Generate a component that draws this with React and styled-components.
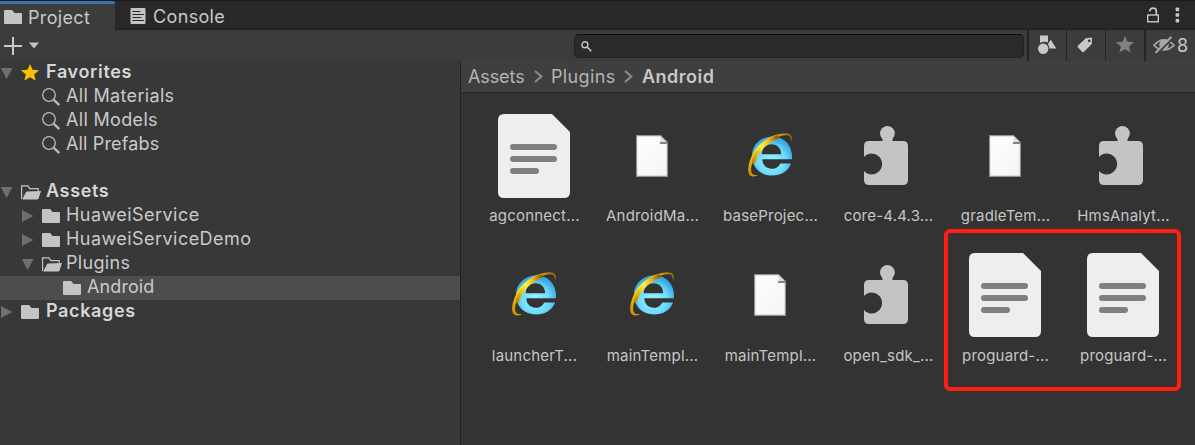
import React from "react";
import styled, { createGlobalStyle } from "styled-components";

const GlobalStyle = createGlobalStyle`
  * { box-sizing: border-box; }
  body { margin: 0; background: #333333; }
  svg { display: block; flex: none; }
`;

const Window = styled.div`
  position: relative;
  display: flex;
  flex-direction: column;
  width: 1195px;
  height: 445px;
  overflow: hidden;
  background: #383838;
  color: #c8c8c8;
  font-family: Inter, "Liberation Sans", sans-serif;
  font-size: 18px;
  white-space: nowrap;
`;

const TabBar = styled.div`
  display: flex;
  height: 30px;
  flex: none;
  background: #282828;
  border-top: 1px solid #191919;
  border-bottom: 1px solid #202020;
`;

const Tab = styled.div`
  display: flex;
  align-items: center;
  gap: ${(p) => (p.$active ? 6 : 7)}px;
  width: ${(p) => (p.$active ? 115 : 130)}px;
  height: ${(p) => (p.$active ? 29 : 28)}px;
  padding: ${(p) => (p.$active ? "0 0 0 4px" : "2px 0 0 15px")};
  background: ${(p) => (p.$active ? "#3c3c3c" : "transparent")};
  border-top: ${(p) => (p.$active ? "3px solid #3a72b0" : "0")};
  border-radius: 0 2px 0 0;
  letter-spacing: 0.35px;
`;

const WindowActions = styled.div`
  display: flex;
  align-items: center;
  gap: 16px;
  margin-left: auto;
  padding-right: 15px;
`;

const Toolbar = styled.div`
  display: flex;
  align-items: center;
  height: 31px;
  flex: none;
  background: #3c3c3c;
`;

const AddButton = styled.div`
  display: flex;
  align-items: center;
  gap: 7px;
  padding-left: 4px;
`;

const SearchField = styled.div`
  display: flex;
  align-items: center;
  width: 450px;
  height: 24px;
  margin-left: auto;
  padding: 1px 0 0 6px;
  background: #2a2a2a;
  border: 1px solid #212121;
  border-top-color: #0d0d0d;
  border-radius: 5px;
`;

const FilterButtons = styled.div`
  display: flex;
  height: 31px;
  margin-left: 3px;
`;

const FilterButton = styled.div`
  display: flex;
  align-items: center;
  justify-content: center;
  gap: 2px;
  width: ${(p) => p.$width}px;
  padding: 0 ${(p) => p.$inset || 0}px 1px 0;
  border-left: ${(p) => p.$edge || 1}px solid #242424;
`;

const Panels = styled.div`
  display: flex;
  flex: 1;
  min-height: 0;
`;

const Tree = styled.div`
  width: 460px;
  flex: none;
`;

const TreeRow = styled.div`
  display: flex;
  align-items: center;
  height: 24px;
  padding-left: ${(p) => p.$depth * 21}px;
  margin-top: ${(p) => p.$gap || 0}px;
  background: ${(p) => (p.$selected ? "#4d4d4d" : "transparent")};
  color: ${(p) => (p.$bold ? "#d6d6d6" : "#cacaca")};
  font-weight: ${(p) => (p.$bold ? 600 : 400)};
  letter-spacing: ${(p) => (p.$bold ? 0.65 : p.$tracking || 0.33)}px;
`;

const ArrowSlot = styled.span`
  width: 21px;
  flex: none;
`;

const IconSlot = styled.span`
  width: ${(p) => (p.$wide ? 25 : 24)}px;
  flex: none;
`;

const TreeLabel = styled.span`
  line-height: 22px;
  padding-bottom: 2px;
`;

const Browser = styled.div`
  flex: 1;
  background: #333333;
  border-left: 1px solid #222222;
`;

const Breadcrumb = styled.div`
  display: flex;
  align-items: center;
  height: 32px;
  padding-left: 7px;
  background: #3f3f3f;
  border-bottom: 1px solid #282828;
  letter-spacing: 0.1px;
`;

const Crumb = styled.span`
  width: ${(p) => p.$width}px;
  font-weight: ${(p) => (p.$current ? 600 : 400)};
  color: ${(p) => (p.$current ? "#c8c8c8" : "#b4b4b4")};
  letter-spacing: ${(p) => p.$tracking}px;
`;

const CrumbArrow = styled.span`
  width: ${(p) => p.$width}px;
`;

const Grid = styled.div`
  display: grid;
  grid-template-columns: repeat(4, 118px) 116px 120px;
  grid-auto-rows: 139px;
  padding: 15px 0 0 14px;
`;

const Asset = styled.div`
  display: flex;
  flex-direction: column;
  align-items: center;
`;

const Thumb = styled.div`
  display: flex;
  align-items: center;
  justify-content: center;
  height: 96px;
`;

const AssetName = styled.div`
  margin-top: ${(p) => (p.$lower ? 3 : 2)}px;
  padding-left: 1px;
  font-size: 15px;
  line-height: 20px;
  letter-spacing: 0.2px;
  color: #c6c6c6;
`;

const Highlight = styled.div`
  position: absolute;
  left: 944px;
  top: 229px;
  width: 237px;
  height: 162px;
  border: 4px solid #ff1f12;
  border-radius: 6px;
`;

const Folder = () => (
  <svg width="18" height="14" viewBox="0 0 18 14">
    <path d="M0 1Q0 0 1 0H7.5Q8.3 0 8.8 .7L10.5 3H17Q18 3 18 4V13Q18 14 17 14H1Q0 14 0 13Z" fill="#c4c4c4" />
  </svg>
);

const OpenFolder = () => (
  <svg width="20" height="15" viewBox="0 0 20 15">
    <path d="M.6 14V.9H7L8.7 3.6H17.2V6" fill="none" stroke="#c4c4c4" strokeWidth="1.2" />
    <path d="M1.3 14.2 4.8 7.4Q5.2 6.5 6.2 6.4L20 6 17.6 13.4Q17.3 14.5 16 14.5H1Z" fill="#c4c4c4" />
  </svg>
);

const Star = ({ fill }) => (
  <svg width="18" height="18" viewBox="0 0 18 18">
    <path d="M9 0 11.5 5.8 18 6.3 13.1 10.4 14.7 16.6 9 13.2 3.3 16.6 4.9 10.4 0 6.3 6.5 5.8Z" fill={fill} />
  </svg>
);

const Magnifier = () => (
  <svg width="18" height="18" viewBox="0 0 18 18" fill="none" stroke="#b8b8b8">
    <circle cx="7" cy="7" r="6.3" strokeWidth="1.3" />
    <path d="M11.6 11.6 12.5 12.5" strokeWidth="1.2" />
    <path d="M12.6 12.7 16.6 16.4" strokeWidth="2.4" strokeLinecap="round" />
  </svg>
);

const Arrow = ({ open }) => (
  <svg width="13" height="14" viewBox="0 0 13 14">
    <path d={open ? "M.8 2H12.5L6.6 13Z" : "M1 1V13L12.5 7Z"} fill="#6f6f6f" />
  </svg>
);

const ConsoleIcon = () => (
  <svg width="16" height="16" viewBox="0 0 16 16">
    <rect x=".5" width="15" height="16" rx="1" fill="#c4c4c4" />
    <path d="M2.5 3.5H10.5M2.5 6.5H14M2.5 9.5H11.5M2.5 12.5H14" stroke="#282828" strokeWidth="1.2" />
  </svg>
);

const Lock = () => (
  <svg width="12" height="16" viewBox="0 0 12 16" fill="none" stroke="#c8c8c8">
    <rect x=".7" y="8" width="10.6" height="6.8" strokeWidth="1.4" />
    <path d="M2.7 4.3Q3 1.2 6.2 1.2Q9.3 1.2 9.3 4.5V8" strokeWidth="1.7" />
  </svg>
);

const Kebab = () => (
  <svg width="5" height="16" viewBox="0 0 5 16" fill="#c8c8c8">
    <rect x=".6" y=".6" width="3.6" height="3.6" rx="1" />
    <rect x=".6" y="6.2" width="3.6" height="3.6" rx="1" />
    <rect x=".6" y="11.8" width="3.6" height="3.6" rx="1" />
  </svg>
);

const Plus = () => (
  <svg width="18" height="18" viewBox="0 0 18 18">
    <path d="M9 0V18M0 9H18" stroke="#c8c8c8" strokeWidth="2" />
  </svg>
);

const Caret = () => (
  <svg width="10" height="7" viewBox="0 0 10 7">
    <path d="M0 .5H10L5 6.5Z" fill="#c4c4c4" />
  </svg>
);

const SmallSearch = () => (
  <svg width="11" height="11" viewBox="0 0 11 11" fill="none" stroke="#c8c8c8">
    <circle cx="3.9" cy="3.8" r="3" strokeWidth="1.4" />
    <path d="M6.1 6 10.3 10.2" strokeWidth="1.6" />
  </svg>
);

const Shapes = () => (
  <svg width="19" height="20" viewBox="0 0 19 20" fill="#c8c8c8">
    <path d="M2 .5H10V7.3Q6 5.8 2 8Z" />
    <circle cx="5.2" cy="13.8" r="5.2" />
    <path d="M12.7 4.5 18.3 13.5H11.5Q11.2 10.5 9.8 9.5Z" />
  </svg>
);

const Tag = () => (
  <svg width="16" height="16" viewBox="0 0 16 16">
    <path fillRule="evenodd" d="M8.8 1.2 14 .6Q15 .5 15 1.5L14.8 7 6.8 15Q6 15.6 5.3 14.9L.8 10.3Q.1 9.5 .8 8.8ZM12.2 2.4A1.4 1.4 0 1 0 12.2 5.2 1.4 1.4 0 1 0 12.2 2.4Z" fill="#c8c8c8" />
  </svg>
);

const HiddenEye = () => (
  <svg width="22" height="18" viewBox="0 0 22 18" fill="none" stroke="#a8a8a8">
    <path d="M1 9.3Q10.7 -1.5 21 9.3Q10.7 18.5 1 9.3Z" strokeWidth="1.6" />
    <circle cx="11" cy="8.8" r="4.8" fill="#a8a8a8" stroke="none" />
    <path d="M4.2 17.7 20 2.2" stroke="#3c3c3c" strokeWidth="1.8" />
    <path d="M2.6 16.8 18.5 .8" strokeWidth="2" />
  </svg>
);

const Chevron = () => (
  <svg width="9" height="13" viewBox="0 0 9 13">
    <path d="M1 1 7.4 6.5 1 12" fill="none" stroke="#8c8c8c" strokeWidth="2.2" />
  </svg>
);

const TextAsset = () => (
  <svg width="72" height="84" viewBox="0 0 72 84">
    <path d="M6 0H54L72 18V78Q72 84 66 84H6Q0 84 0 78V6Q0 0 6 0Z" fill="#eeeeee" />
    <path d="M15 33H56M15 45H56M15 57H38" stroke="#808080" strokeWidth="6" strokeLinecap="round" />
  </svg>
);

const BlankFile = () => (
  <svg width="32" height="42" viewBox="0 0 32 42">
    <defs>
      <linearGradient id="paper" x1="0" y1="0" x2="1" y2="1">
        <stop offset="0" stopColor="#ffffff" />
        <stop offset="1" stopColor="#f2f4f6" />
      </linearGradient>
    </defs>
    <path d="M.6 .6H24.5L31.4 7.5V41.4H.6Z" fill="url(#paper)" stroke="#939593" strokeWidth="1.2" />
    <path d="M24.5 1V7.5H31Z" fill="#dcdedf" />
    <path d="M24 8H31.4" stroke="#777" strokeWidth="1.8" />
  </svg>
);

const Plugin = () => (
  <svg width="50" height="62" viewBox="0 0 50 62" fill="#c4c4c4">
    <circle cx="24.4" cy="8.5" r="7.4" />
    <path d="M19.5 12H29.5V17H19.5Z" />
    <path d="M6 16H40Q45 16 45 21V55Q45 60 40 60H6Q1 60 1 55V46A10.4 10.4 0 1 0 1 32V21Q1 16 6 16Z" />
  </svg>
);

const Explorer = () => (
  <svg width="48" height="48" viewBox="0 0 48 48">
    <defs>
      <radialGradient id="globe" cx=".48" cy=".62" r=".58">
        <stop offset="0" stopColor="#9af4ff" />
        <stop offset=".6" stopColor="#6fdcfb" />
        <stop offset="1" stopColor="#35a6e0" />
      </radialGradient>
      <linearGradient id="gold" x1="0" y1="1" x2="1" y2="0">
        <stop offset="0" stopColor="#c58b00" />
        <stop offset=".3" stopColor="#f3c50e" />
        <stop offset=".5" stopColor="#ffee50" />
        <stop offset=".75" stopColor="#efb90c" />
        <stop offset="1" stopColor="#8d6000" />
      </linearGradient>
    </defs>
    <path
      fillRule="evenodd"
      fill="url(#globe)"
      d="M46 27.3H16.3C16.5 33 20.5 36.8 25.8 36.8C30 36.8 32.8 34.5 34.3 31.5H45C42.5 39 35.5 43.5 26 43.5C14 43.5 6 35 6 24C6 12.5 15 4.5 26 4.5C38.5 4.5 47 13.5 46 27.3ZM15.7 22.3H35.2C35 16 31 12.3 25.5 12.3C20 12.3 16 16 15.7 22.3Z"
    />
    <path
      fill="url(#gold)"
      d="M45 10C47 4 45 1 39 1.2C28 1.5 15 8.5 8 19.5C2 30 .5 40 4 43.5C6 45 9 44.8 12 43C8 43.5 5.8 42.5 5.2 39.5C4.5 34 7.5 25.5 13 18.5C21 9 33 3.2 40 3.2C44 3.2 45 5 45 10Z"
    />
    <path d="M7.5 30C10 20 19 9.8 31 5.3" fill="none" stroke="url(#gold)" strokeWidth="3.6" strokeLinecap="round" />
  </svg>
);

const treeIcons = {
  star: <Star fill="#ffc107" />,
  search: <Magnifier />,
  folder: <Folder />,
  open: <OpenFolder />,
};

const tree = [
  { label: "Favorites", depth: 0, icon: "star", arrow: "open", bold: true },
  { label: "All Materials", depth: 1, icon: "search" },
  { label: "All Models", depth: 1, icon: "search" },
  { label: "All Prefabs", depth: 1, icon: "search", tracking: 0.15 },
  { label: "Assets", depth: 0, icon: "open", arrow: "open", bold: true, gap: 23 },
  { label: "HuaweiService", depth: 1, icon: "folder", arrow: "closed", tracking: 0.45 },
  { label: "HuaweiServiceDemo", depth: 1, icon: "folder", arrow: "closed", tracking: 0.45 },
  { label: "Plugins", depth: 1, icon: "open", arrow: "open" },
  { label: "Android", depth: 2, icon: "folder", selected: true, tracking: 0.1 },
  { label: "Packages", depth: 0, icon: "folder", arrow: "closed", bold: true },
];

const thumbs = { text: TextAsset, blank: BlankFile, ie: Explorer, plugin: Plugin };

const assets = [
  ["agconnect...", "text"],
  ["AndroidMa...", "blank"],
  ["baseProjec...", "ie"],
  ["core-4.4.3...", "plugin"],
  ["gradleTem...", "blank"],
  ["HmsAnalyt...", "plugin"],
  ["launcherT...", "ie"],
  ["mainTempl...", "ie"],
  ["mainTempl...", "blank"],
  ["open_sdk_...", "plugin"],
  ["proguard-...", "text"],
  ["proguard-...", "text"],
];

export default function App() {
  return (
    <>
      <GlobalStyle />
      <Window>
        <TabBar>
          <Tab $active>
            <Folder />
            Project
          </Tab>
          <Tab>
            <ConsoleIcon />
            Console
          </Tab>
          <WindowActions>
            <Lock />
            <Kebab />
          </WindowActions>
        </TabBar>
        <Toolbar>
          <AddButton>
            <Plus />
            <Caret />
          </AddButton>
          <SearchField>
            <SmallSearch />
          </SearchField>
          <FilterButtons>
            <FilterButton $width={39} $edge={2}><Shapes /></FilterButton>
            <FilterButton $width={39} $inset={2}><Tag /></FilterButton>
            <FilterButton $width={39}><Star fill="#808080" /></FilterButton>
            <FilterButton $width={51} $edge={2}><HiddenEye />8</FilterButton>
          </FilterButtons>
        </Toolbar>
        <Panels>
          <Tree>
            {tree.map((row) => (
              <TreeRow key={row.label} $depth={row.depth} $bold={row.bold} $selected={row.selected} $gap={row.gap} $tracking={row.tracking}>
                <ArrowSlot>{row.arrow && <Arrow open={row.arrow === "open"} />}</ArrowSlot>
                <IconSlot $wide={row.bold}>{treeIcons[row.icon]}</IconSlot>
                <TreeLabel>{row.label}</TreeLabel>
              </TreeRow>
            ))}
          </Tree>
          <Browser>
            <Breadcrumb>
              <Crumb $width={66} $tracking={-0.1}>Assets</Crumb>
              <CrumbArrow $width={17}><Chevron /></CrumbArrow>
              <Crumb $width={73} $tracking={0.35}>Plugins</Crumb>
              <CrumbArrow $width={18}><Chevron /></CrumbArrow>
              <Crumb $current $tracking={0.5}>Android</Crumb>
            </Breadcrumb>
            <Grid>
              {assets.map(([name, kind], i) => {
                const Icon = thumbs[kind];
                return (
                  <Asset key={i}>
                    <Thumb><Icon /></Thumb>
                    <AssetName $lower={i > 5}>{name}</AssetName>
                  </Asset>
                );
              })}
            </Grid>
          </Browser>
        </Panels>
        <Highlight />
      </Window>
    </>
  );
}
